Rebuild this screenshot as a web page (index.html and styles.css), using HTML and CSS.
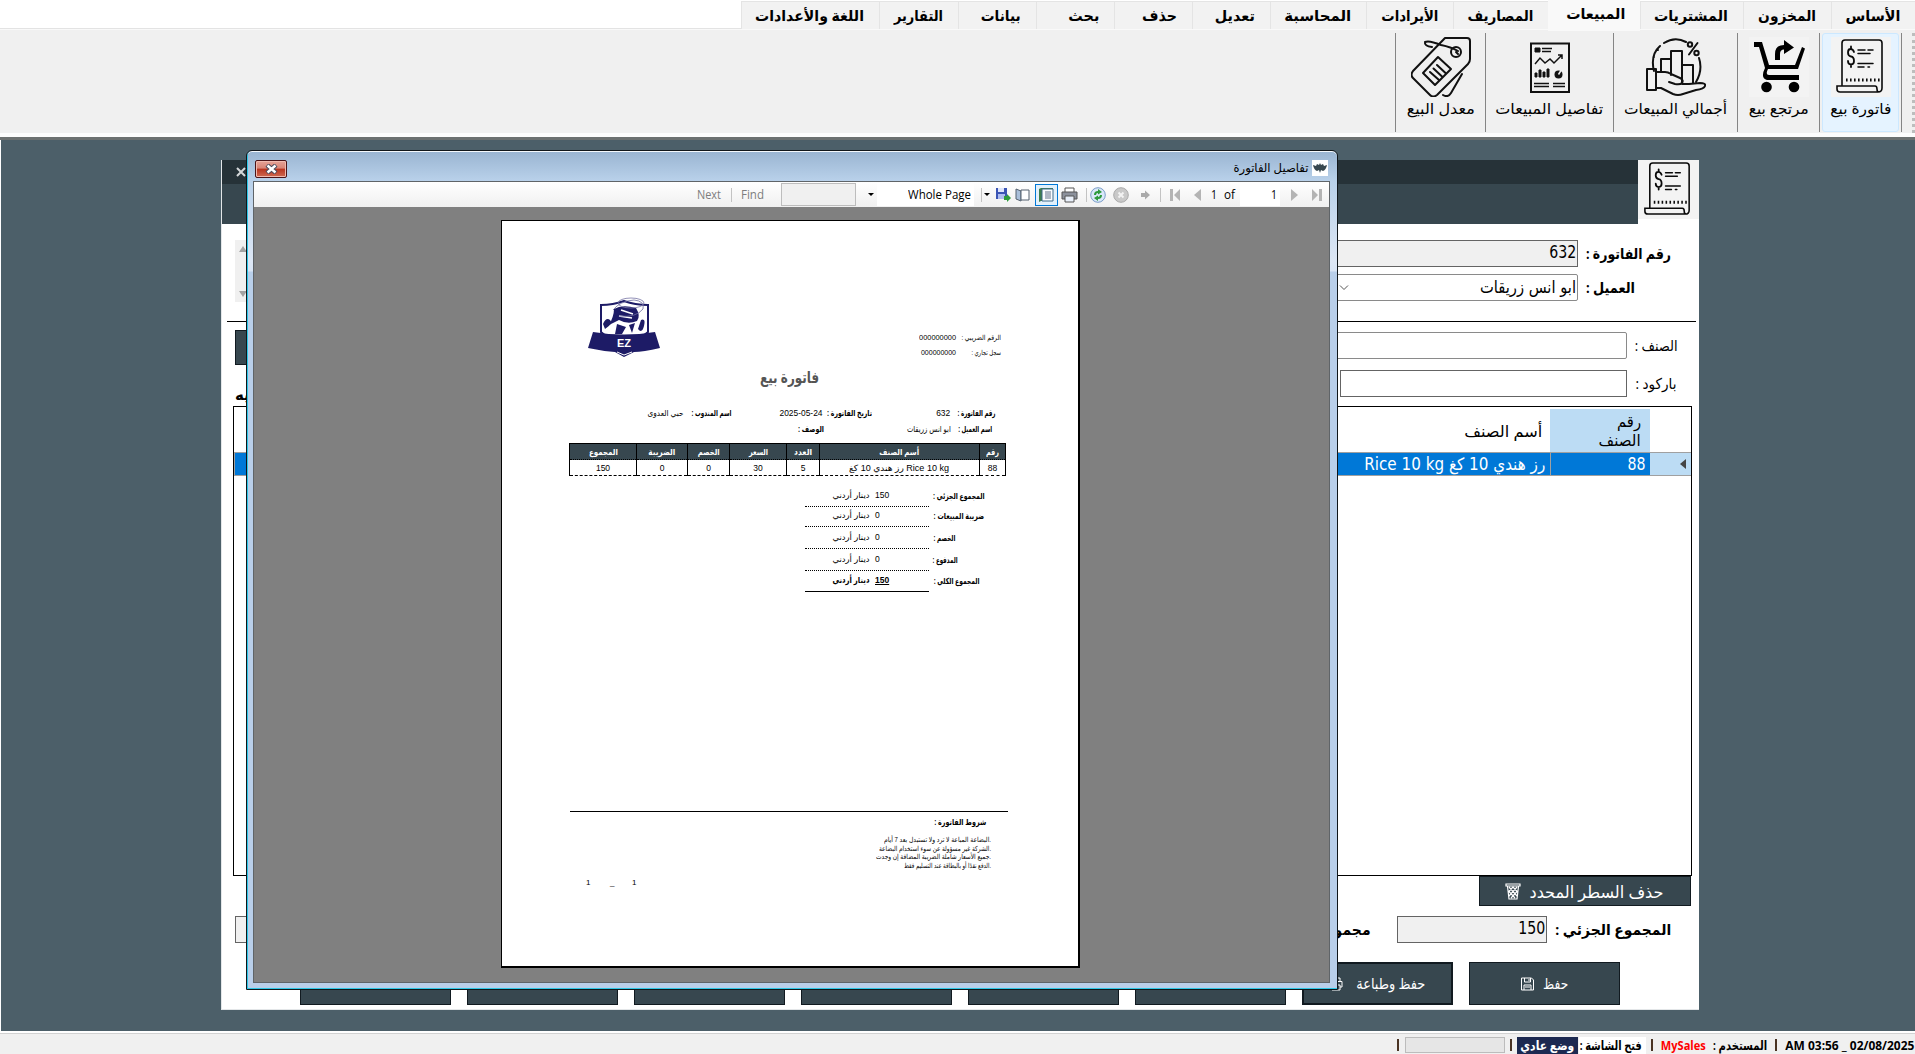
FILE: index.html
```html
<!DOCTYPE html>
<html lang="ar">
<head>
<meta charset="utf-8">
<title>MySales</title>
<link rel="stylesheet" href="styles.css">
</head>
<body>
<svg class="defs" width="0" height="0">
  <symbol id="receipt" viewBox="0 0 60 60">
    <g fill="none" stroke="#0a0a0a" stroke-width="1.6" stroke-linecap="round">
      <path d="M11 48V6q0-3 3-3h34q3 0 3 3v45q0 4-4 4H9q-3 0-3-3v-3h38q2 0 2 3t2 3"/>
      <path d="M23 15q-1-3-3.500-3Q17 12 17 15.500T20 19.500T23 24q0 3.500-3 3.500T17 24M20 9.500V12M20 27.500V30" stroke-width="1.800"/>
      <path d="M27 13h7M37 13h5M27 16.500h12M27 26.500h15M27 30h6M37 30h1.500" stroke-width="1.500"/>
      <path d="M15 43h34" stroke-width="3" stroke-dasharray="1.600 2.400" stroke-linecap="butt"/>
    </g>
  </symbol>
</svg>

<div class="app" dir="rtl">
  <nav class="tabs">
    <div class="tab w84"><span class="fit" data-w="55">الأساس</span></div>
    <div class="tab w88"><span class="fit" data-w="58">المخزون</span></div>
    <div class="tab w103"><span class="fit" data-w="74">المشتريات</span></div>
    <div class="tab w92 active"><span class="fit" data-w="59">المبيعات</span></div>
    <div class="tab w95"><span class="fit" data-w="66">المصاريف</span></div>
    <div class="tab w87"><span class="fit" data-w="57">الأيرادات</span></div>
    <div class="tab w96"><span class="fit" data-w="67">المحاسبة</span></div>
    <div class="tab w78"><span class="fit" data-w="40">تعديل</span></div>
    <div class="tab w78"><span class="fit" data-w="35">حذف</span></div>
    <div class="tab w78"><span class="fit" data-w="31">بحث</span></div>
    <div class="tab w78"><span class="fit" data-w="40">بيانات</span></div>
    <div class="tab w79"><span class="fit" data-w="49">التقارير</span></div>
    <div class="tab w138"><span class="fit" data-w="109">اللغة والأعدادات</span></div>
  </nav>

  <div class="ribbon">
    <div class="grip"></div>
    <div class="tool"><div class="tool-in hot">
      <svg class="paper" width="60" height="60"><use href="#receipt"/></svg>
      <span class="fit" data-w="61">فاتورة بيع</span></div></div>
    <div class="tool"><div class="tool-in">
      <svg class="paper" width="60" height="60" viewBox="0 0 60 60">
        <path d="M5 5H13L20 28H46L53 10L56 11.500L49 32H19Q16 38 20 38H50V43H18Q11 41 16 31L10 10H5Z"/>
        <path d="M26 23V17Q26 8 35 8V3L45 10.500L35 17V12.500Q31 12.500 31 17V23Z"/>
        <circle cx="17.500" cy="50" r="5.300"/><circle cx="45" cy="50" r="5.300"/>
      </svg>
      <span class="fit" data-w="60">مرتجع بيع</span></div></div>
    <div class="tool"><div class="tool-in">
      <svg width="60" height="60" viewBox="0 0 60 60" fill="none" stroke="#111" stroke-width="2" stroke-linejoin="round" stroke-linecap="round">
        <path d="M8 34Q4 18 14 9M12 13v0M18 6Q29-1 40 5M53 21Q57 33 50 45M8 20v0"/>
        <circle cx="44" cy="7.500" r="2.200"/><circle cx="50.500" cy="16" r="2.200"/><path d="M51.500 6L43 17.500"/>
        <path d="M15 34V22H25V38M25 38V14H36V46M36 28H47V46"/>
        <path d="M1 32H10V53H1ZM10 35H19Q22 35 25 37L34 41Q38 43 36 46Q34 48 29 47L23 45M36 47H43L54 46Q60 46 59 49Q58 52 50 53L37 57Q32 59 27 57L15 51H10"/>
      </svg>
      <span class="fit" data-w="103">أجمالي المبيعات</span></div></div>
    <div class="tool"><div class="tool-in">
      <svg width="60" height="60" viewBox="0 0 60 60" fill="none" stroke="#111" stroke-width="1.500">
        <path d="M11 6.500H49V55H11Z" stroke-width="2"/><path d="M15 11h5v4h-5zM15 40V36h2v4zM19 40V33h2v7zM23 40V35h2v5zM27 40V32h2v8z" fill="#111" stroke-width="1"/>
        <path d="M22 11.500h10M22 14.500h9M14 46.500h15M14 49.500h15M33 46.500h12M33 49.500h12M15 27L20 21L25 26L30 22L34 26L42 18M38 18h4v4"/>
        <circle cx="38.500" cy="37.500" r="4" fill="#111" stroke="none"/><path d="M38.500 37.500L42 32" stroke="#f0f0f0"/>
      </svg>
      <span class="fit" data-w="108">تفاصيل المبيعات</span></div></div>
    <div class="tool last"><div class="tool-in">
      <svg width="60" height="60" viewBox="0 0 60 60" fill="none" stroke="#111" stroke-width="2" stroke-linejoin="round" stroke-linecap="round">
        <path d="M34 1H56Q59 1 59 4V22Q59 25 57 27L26 58Q22 61 19 58L2 41Q-1 38 2 34Z"/>
        <path d="M27 20L40 32L24 48L12 36Z"/><path d="M19 35L28 43M22.500 31.500L31 39.500M26 28L34.500 36"/>
        <circle cx="45" cy="15" r="5"/><path d="M47 14Q40 10 30 8Q18 3 14 5Q13 9 21 10M45 15l2 2"/>
        <path d="M51 37L40 56Q37 61 32 58"/>
      </svg>
      <span class="fit" data-w="68">معدل البيع</span></div></div>
  </div>

  <main class="desktop">
    <section class="form">
      <header class="form-head">
        <svg class="paper" width="61" height="59" viewBox="0 0 60 60"><use href="#receipt"/></svg>
        <div class="form-bar"><div class="form-close"><svg width="10" height="10" viewBox="0 0 10 10"><path d="M1 1L9 9M9 1L1 9" stroke="#d5d8da" stroke-width="2"/></svg></div></div>
      </header>
      <div class="top-fields">
        <div class="fields">
          <label><b class="fit" data-w="85">رقم الفاتورة :</b></label><div class="input ro"><span class="fit" data-w="27">632</span></div>
          <label><b class="fit" data-w="49">العميل :</b></label><div class="input combo"><span class="fit" data-w="96">ابو انس زريقات</span>
            <svg width="10" height="6" viewBox="0 0 10 6"><path d="M1 .5L5 4.500L9 .5" fill="none" stroke="#555"/></svg></div>
        </div>
        <div class="scroll"><i class="up"></i><i class="down"></i></div>
      </div>
      <div class="item-fields">
        <div class="fields narrow">
          <label><span class="fit" data-w="43">الصنف :</span></label><div class="input light"></div>
          <label><span class="fit" data-w="41">باركود :</span></label><div class="input half"></div>
        </div>
        <div class="left-side"><div class="dark-btn"></div><b class="fit">الكميه</b></div>
      </div>
      <div class="grid">
        <div class="grid-head">
          <div></div>
          <div class="sel"><span class="fit" data-w="24">رقم</span><span class="fit" data-w="42">الصنف</span></div>
          <div class="name"><span class="fit" data-w="78">أسم الصنف</span></div>
        </div>
        <div class="grid-row">
          <div class="mark"><i></i></div>
          <div><span class="fit" data-w="18">88</span></div>
          <div><span class="fit" data-w="181">رز هندي 10 كغ Rice 10 kg</span></div>
        </div>
      </div>
      <div class="delete"><span class="fit" data-w="134">حذف السطر المحدد</span>
        <svg width="16" height="17" viewBox="0 0 16 17" fill="none" stroke="#fff" stroke-width="1.200"><path d="M1 1H15V3H1ZM2.500 3.500L4 16H12L13.500 3.500M4 4L12 13M8 4L12.500 9M3.500 8L10 15M12 4L4 13M8 4L3.500 9M12.500 8L6 15"/></svg>
      </div>
      <div class="sums">
        <b class="fit" data-w="116">المجموع الجزئي :</b><div class="input ro"><span class="fit" data-w="27">150</span></div>
        <b class="fit second" data-w="110">مجموع الضريبة :</b><div class="input ro end"></div>
      </div>
      <div class="actions">
        <div class="act"><span class="fit" data-w="25">حفظ</span>
          <svg width="13" height="14" viewBox="0 0 13 14" fill="none" stroke="#fff"><path d="M1 1H10.500L12.500 3V13H.5V1ZM3.500 1V5H9.500V1M8 2V4M3 13V8H10V13M4 10H9"/></svg></div>
        <div class="act focus"><span class="fit" data-w="69">حفظ وطباعة</span>
          <svg width="14" height="14" viewBox="0 0 14 14" fill="none" stroke="#fff"><path d="M3 4V1H11V4M3 10H1V4.500H13V10H11M3 8H11V13H3Z"/></svg></div>
        <div class="act"></div><div class="act"></div><div class="act"></div><div class="act"></div><div class="act"></div><div class="act"></div>
      </div>
    </section>

    <section class="dialog">
      <div class="title">
        <svg class="logo16" width="16" height="16" viewBox="0 0 16 16" fill="#37474f"><path d="M8 3L9 5L11 4L12 6L15 5Q14 10 11 11L9 10L8 13L7 10L5 11Q2 10 1 5L4 6L5 4L7 5Z"/></svg>
        <span class="fit" data-w="75">تفاصيل الفاتورة</span>
        <div class="close"><svg width="13" height="10" viewBox="0 0 13 10"><path d="M2 1L11 9M11 1L2 9" stroke="#4a4a5c" stroke-width="4.500"/><path d="M2.500 1.500L10.500 8.500M10.500 1.500L2.500 8.500" stroke="#fff" stroke-width="2.400"/></svg></div>
      </div>
      <div class="client">
        <div class="viewer-bar" dir="ltr">
          <span></span>
          <span class="fit off" data-w="24">Next</span><i class="sep"></i><span class="fit off" data-w="23">Find</span>
          <span class="find"></span><i class="tri"></i>
          <span class="zoom"><span class="fit" data-w="63">Whole Page</span></span><i class="sep"></i><i class="tri"></i>
          <svg width="16" height="16" viewBox="0 0 16 16"><path d="M1 1H12V12H1Z" fill="#3b55b5"/><path d="M3 1H9V5H3Z" fill="#dfe6fb"/><path d="M3 7H10V12H3Z" fill="#aebdf0"/><path d="M9 9H12V7L16 11L12 15V13H9Z" fill="#2e9c3c"/></svg>
          <svg width="16" height="16" viewBox="0 0 16 16" stroke="#55616f"><path d="M1 2L6 4V14L1 12Z" fill="#a9bfda"/><path d="M6 3H14V13H6Z" fill="#fff"/></svg>
          <span class="picked"><svg width="17" height="16" viewBox="0 0 17 16"><path d="M1 2L3 1H15V14H3L1 15Z" fill="#3d7d4f"/><path d="M4 2H15V14H4Z" fill="#fafcff" stroke="#3f6a8a"/><path d="M7 5H13M7 7H13M7 9H13M7 11H13" stroke="#65758c"/></svg></span>
          <svg width="17" height="16" viewBox="0 0 17 16" stroke="#555"><path d="M4 1H13V6H4Z" fill="#fff"/><path d="M1 5H16V12H1Z" fill="#8c919c"/><path d="M4 9H13V15H4Z" fill="#e9f0fa"/></svg>
          <i class="sep"></i>
          <svg width="16" height="16" viewBox="0 0 16 16"><circle cx="8" cy="8" r="7.300" fill="#d9e8fa" stroke="#7a9cc8"/><path d="M4 8Q4 4 8 4V2L12 5L8 7.500V6Q6 6 6 8ZM12 8Q12 12 8 12V14L4 11L8 8.500V10Q10 10 10 8Z" fill="#2c9a3c"/></svg>
          <svg width="16" height="16" viewBox="0 0 16 16"><circle cx="8" cy="8" r="7.300" fill="#c9c9c9" stroke="#aaa"/><path d="M5.500 5.500L10.500 10.500M10.500 5.500L5.500 10.500" stroke="#f3f3f3" stroke-width="2"/></svg>
          <svg width="11" height="10" viewBox="0 0 11 10"><path d="M1 3H5V.5L10 5L5 9.500V7H1Z" fill="#aaa"/></svg>
          <i class="sep"></i>
          <svg width="11" height="12" viewBox="0 0 11 12" fill="#b4b4b4"><path d="M0 0H3V12H0ZM10 0V12L4 6Z"/></svg>
          <svg width="7" height="12" viewBox="0 0 7 12" fill="#b4b4b4"><path d="M7 0V12L0 6Z"/></svg>
          <span class="fit" data-w="6">1</span><span class="fit" data-w="11">of</span><span class="pageno"><span class="fit" data-w="6">1</span></span>
          <svg width="7" height="12" viewBox="0 0 7 12" fill="#b4b4b4"><path d="M0 0V12L7 6Z"/></svg>
          <svg width="11" height="12" viewBox="0 0 11 12" fill="#b4b4b4"><path d="M0 0V12L6 6ZM7 0H10V12H7Z"/></svg>
        </div>

        <article class="page">
          <div class="inv-head">
            <div class="tax">
              <span class="fit" data-w="39">الرقم الضريبي :</span><span class="fit" data-w="37">000000000</span>
              <span class="fit" data-w="34">سجل تجاري :</span><span class="fit" data-w="37">000000000</span>
            </div>
            <svg width="72" height="62" viewBox="0 0 72 62">
              <path d="M36 5Q25 9 13 9V36L36 55L60 36V9Q47 9 36 5Z" fill="#fff" stroke="#1d1b66" stroke-width="2"/>
              <path d="M26 13Q34 8 48 12Q53 20 49 25Q40 29 31 24L21 29Q26 20 26 13Z" fill="#1d1b66"/>
              <path d="M33 14L45 18M31 20L44 22" stroke="#fff" stroke-width="1.500"/>
              <path d="M15 28Q18 21 22 24T17 33ZM53 24Q58 22 56 30T50 33ZM29 28L38 31L34 38H27ZM41 29L47 27L44 37Z" fill="#1d1b66"/>
              <ellipse cx="43" cy="7" rx="13" ry="5" fill="none" stroke="#7775a5" stroke-width=".8"/><path d="M25 14Q32 5 46 4Q57 5 55 13Q48 22 31 20" fill="none" stroke="#6f6da0" stroke-width=".8"/>
              <path d="M5 36Q36 41 67 36L72 52Q55 56 46 56L36 61L27 56Q14 55 0 52Z" fill="#1d1b66"/>
              <path d="M29 56L36 59L44 56" stroke="#fff" fill="none" stroke-width="1"/>
              <text x="36" y="51" text-anchor="middle" class="badge">EZ</text>
            </svg>
          </div>
          <h1><span class="fit" data-w="59">فاتورة بيع</span></h1>
          <div class="meta one">
            <b class="fit" data-w="38">رقم الفاتورة :</b><span class="fit" data-w="14">632</span>
            <b class="fit" data-w="45">تاريخ الفاتورة :</b><span class="fit" data-w="43">2025-05-24</span>
            <b class="fit" data-w="40">اسم المندوب :</b><span class="fit" data-w="36">حبي العدوى</span>
          </div>
          <div class="meta two">
            <b class="fit" data-w="34">اسم العميل :</b><span class="fit" data-w="44">ابو انس زريقات</span><b class="fit" data-w="26">الوصف :</b>
          </div>
          <table class="lines">
            <colgroup><col class="c1"><col class="c2"><col class="c3"><col class="c4"><col class="c5"><col class="c6"><col class="c7"></colgroup>
            <tr><th><span class="fit" data-w="13">رقم</span></th><th><span class="fit" data-w="40">أسم الصنف</span></th><th><span class="fit" data-w="18">العدد</span></th><th><span class="fit" data-w="19">السعر</span></th><th><span class="fit" data-w="22">الخصم</span></th><th><span class="fit" data-w="27">الضريبة</span></th><th><span class="fit" data-w="29">المجموع</span></th></tr>
            <tr><td>88</td><td dir="ltr"><span class="fit" data-w="100">رز هندي 10 كغ Rice 10 kg</span></td><td>5</td><td>30</td><td>0</td><td>0</td><td>150</td></tr>
          </table>
          <div class="totals">
            <div class="total r1"><b class="fit" data-w="56">المجموع الجزئي :</b><div><span>150</span><span class="fit" data-w="37">دينار أردني</span></div></div>
            <div class="total r2"><b class="fit" data-w="55">ضريبة المبيعات :</b><div><span>0</span><span class="fit" data-w="37">دينار أردني</span></div></div>
            <div class="total r3"><b class="fit" data-w="26">الخصم :</b><div><span>0</span><span class="fit" data-w="37">دينار أردني</span></div></div>
            <div class="total r3"><b class="fit" data-w="29">المدفوع :</b><div><span>0</span><span class="fit" data-w="37">دينار أردني</span></div></div>
            <div class="total r5"><b class="fit" data-w="50">المجموع الكلي :</b><div><b><u>150</u></b><b class="fit" data-w="37">دينار أردني</b></div></div>
          </div>
          <footer class="terms">
            <b class="fit" data-w="52">شروط الفاتورة :</b>
            <div class="rules">
              <p><span class="fit" data-w="107">البضاعة المباعة لا ترد ولا تستبدل بعد 7 أيام.</span></p>
              <p><span class="fit" data-w="112">الشركة غير مسؤولة عن سوء استخدام البضاعة.</span></p>
              <p><span class="fit" data-w="115">جميع الأسعار شاملة الضريبة المضافة إن وجدت.</span></p>
              <p><span class="fit" data-w="87">الدفع نقدًا أو بالبطاقة عند التسليم فقط.</span></p>
            </div>
          </footer>
          <div class="pages" dir="ltr"><span>1</span><span>_</span><span>1</span></div>
        </article>
      </div>
    </section>
  </main>

  <footer class="status">
    <span class="fit" dir="ltr" data-w="129">AM 03:56 _ 02/08/2025</span><i></i>
    <span class="fit" data-w="54">المستخدم :</span><span class="fit user" data-w="45">MySales</span><i></i>
    <span class="open"><span class="fit" data-w="62">فتح الشاشة :</span></span><span class="mode"><span class="fit" data-w="54">وضع عادي</span></span><i></i>
    <span class="progress"></span><i></i>
  </footer>
</div>
<script src="fit.js"></script>
</body>
</html>
```
FILE: styles.css
```css
* { box-sizing: border-box; }
body { margin: 0; width: 1915px; height: 1054px; overflow: hidden; background: #fff; color: #000;
  font: 16px/1 "Open Sans", "DejaVu Sans", sans-serif; }
svg { display: block; flex: none; }
.defs { position: absolute; }
.fit { display: inline-block; white-space: nowrap; flex: none; }
.app { display: flex; flex-direction: column; height: 1054px; }

.tabs { display: flex; height: 29px; padding-top: 1px; border-bottom: 1px solid #e3e3e3; flex: none; }
.tab { height: 28px; padding: 0 15px 0 0; display: flex; align-items: center; background: #f2f2f2;
  border: 1px solid #e4e4e4; border-width: 1px 0 0 1px; font-weight: bold; font-size: 15px; }
.tab.active { height: 31px; margin-top: -1px; padding-bottom: 5px; background: #f9f9f9; border-color: #f9f9f9; position: relative; }
.w78 { width: 78px; } .w79 { width: 79px; } .w84 { width: 84px; } .w87 { width: 87px; } .w88 { width: 88px; }
.w92 { width: 92px; } .w95 { width: 95px; } .w96 { width: 96px; } .w103 { width: 103px; } .w138 { width: 138px; }

.ribbon { display: flex; height: 111px; flex: none; padding-top: 3px; background: #f0f0f0; border-top: 1px solid #f9f9f9;
  border-bottom: 3px solid #6b7070; box-shadow: inset 0 -4px #fcfcfc; }
.grip { width: 13px; height: 100px; border-right: 3px dotted #bdbdbd; }
.tool { height: 99px; border-right: 1px solid #858585; padding: 0 2px; display: flex; }
.tool:nth-child(2) { width: 82px; } .tool:nth-child(3) { width: 82px; } .tool:nth-child(4) { width: 124px; }
.tool:nth-child(5) { width: 128px; } .tool.last { width: 91px; border-left: 1px solid #858585; }
.tool-in { flex: 1; display: flex; flex-direction: column; align-items: center; padding-top: 3px; gap: 4px; border: 1px solid transparent; font-size: 15px; }
.tool-in.hot { background: #e5f3ff; border-color: #cce8ff; border-radius: 3px; }
.paper { background: #f3f3f3; }

.desktop { position: relative; flex: 1; background: #4c5f69; border-left: 1px solid #fff; }
.form { position: absolute; left: 220px; top: 20px; width: 1478px; height: 850px; background: #fff;
  border-left: 1px solid #e3e6e8; border-bottom: 1px solid #e3e6e8; font-size: 17px; }
.form-head { display: flex; height: 64px; }
.form-bar { flex: 1; background: linear-gradient(#263238 24px, #37474f 24px); }
.form-close { height: 24px; display: flex; justify-content: flex-end; align-items: center; padding-left: 14px; }
.top-fields { display: flex; justify-content: space-between; height: 98px; margin: 0 3px 0 5px; padding: 16px 25px 0 8px; border-bottom: 1px solid #000; }
.fields { display: grid; grid-template-columns: 93px 460px; grid-auto-rows: 27px; row-gap: 7px; }
.fields label { display: flex; justify-content: flex-end; align-items: center; padding-left: 8px; font-size: 15px; }
.input { display: flex; align-items: center; padding-right: 1px; height: 27px; border: 1px solid #646464; background: #fff; font-family: "DejaVu Sans Condensed", "DejaVu Sans", sans-serif; }
.input.ro { background: #f0f0f0; padding-bottom: 3px; }
.input.combo, .input.light { border-color: #8a8a8a; border-radius: 2px; }
.input.combo svg { margin-right: 131px; }
.scroll { width: 20px; height: 62px; background: #f0f0f0; display: flex; flex-direction: column; justify-content: space-between; padding: 6px 0 5px 4px; align-items: flex-end; }
.scroll i { border: 4px solid transparent; }
.scroll .up { border-top: 0; border-bottom: 6px solid #a3a3a3; }
.scroll .down { border-bottom: 0; border-top: 6px solid #a3a3a3; }
.item-fields { display: flex; justify-content: space-between; height: 84px; padding: 10px 0 0 13px; }
.narrow { grid-template-columns: 72px 500px; row-gap: 11px; }
.input.half { width: 287px; }
.left-side { margin-top: -2px; width: 60px; display: flex; flex-direction: column; align-items: flex-end; gap: 22px; font-size: 15px; }
.dark-btn { width: 60px; height: 35px; background: #37474f; border: 1px solid #111a20; }
.grid { height: 470px; margin: 0 7px 0 11px; border: 1px solid #000; border-top: 1px solid #000; padding-top: 2px; }
.grid-head { display: grid; grid-template-columns: 41px 100px 1fr; height: 44px; border-bottom: 1px solid #a0a0a0; font-size: 16px; }
.grid-head .sel { background: #bcdcf4; display: flex; flex-direction: column; align-items: flex-start; justify-content: center; gap: 3px; padding-right: 9px; }
.grid-head .name { display: flex; align-items: center; padding-right: 8px; }
.grid-row { display: grid; grid-template-columns: 41px 100px 1fr; height: 23px; background: #0078d7; color: #fff; border-bottom: 1px solid #a0a0a0; font-family: "DejaVu Sans Condensed", "DejaVu Sans", sans-serif; }
.grid-row > div { display: flex; align-items: center; padding-right: 5px; border-left: 1px solid #a0a0a0; }
.grid-row .mark { background: #bcdcf4; border-left: 0; }
.mark i { border: 5px solid transparent; border-right: 0; border-left: 6px solid #444; transform: scaleX(-1); }
.delete { width: 212px; height: 30px; margin-right: 8px; background: #37474f; border: 1px solid #111a20; color: #fff; display: flex; align-items: center; padding-right: 27px; gap: 8px; }
.sums { display: flex; align-items: center; height: 27px; margin-top: 10px; padding: 0 28px 0 13px; font-size: 15px; }
.sums .input { width: 150px; margin-right: 8px; font-size: 17px; }
.sums .second { margin-right: 26px; }
.sums .end { margin-right: auto; }
.actions { display: flex; gap: 16px; margin-top: 19px; padding-right: 79px; }
.act { width: 151px; height: 43px; background: #37474f; border: 1px solid #111a20; color: #fff; font-size: 15px; display: flex; align-items: center; padding-right: 51px; gap: 9px; }
.act.focus { border-width: 2px; padding-right: 26px; gap: 13px; }

.dialog { position: absolute; left: 245px; top: 10px; width: 1092px; height: 840px; border: 1px solid #10161a; border-radius: 6px 6px 0 0;
  padding: 0 7px 6px 6px; box-shadow: inset 1px -1px #2cc6e6, inset 0 1px #f4f8fc;
  background: linear-gradient(#99b4d1, #b9d1ea 30px, #dde7f5 110px, #d9e5f5 120px, #b9cfea 121px); display: flex; flex-direction: column; }
.title { height: 30px; display: flex; align-items: center; padding: 3px 2px 0 2px; font-size: 12px; }
.title .fit { margin-right: 4px; }
.logo16 { background: #fff; }
.close { margin-right: auto; align-self: flex-start; margin-top: 6px; width: 32px; height: 18px; border: 1px solid #4a1418; border-radius: 2px; box-shadow: inset 0 0 0 1px #f0b9ae;
  background: linear-gradient(#e5a397, #d98476 45%, #b8341f 50%, #cf6a52); display: flex; align-items: center; justify-content: center; }
.client { flex: 1; background: #808080; border: 1px solid #5f6468; }
.viewer-bar { display: grid; height: 25px; align-items: center; justify-items: start; background: linear-gradient(#fff, #f0f0f0); font-size: 12px;
  grid-template-columns: 443px 34px 10px 40px 87px 9px 104px 3px 11px 20px 20px 26px 25px 4px 23px 27px 20px 10px 24px 17px 13px 16px 51px 21px 11px; }
.off { color: #7d7d7d; }
.sep { width: 1px; height: 14px; background: #c3c3c3; }
.tri { border: 3px solid transparent; border-top-color: #000; border-bottom: 0; }
.find { width: 75px; height: 23px; background: #f0f0f0; border: 1px solid #bdbdbd; }
.zoom { width: 97px; height: 23px; background: #fff; display: flex; align-items: center; justify-content: flex-end; padding-right: 3px; }
.picked { width: 23px; height: 22px; border: 1px solid #0078d7; background: #e2f0fb; display: flex; align-items: center; justify-content: center; }
.pageno { width: 40px; height: 23px; background: #fff; display: flex; align-items: center; justify-content: flex-end; padding-right: 3px; }

.page { width: 579px; height: 748px; margin: 13px auto 0 0; position: relative; left: 247px; background: #fff; border: 1px solid #000; border-width: 1px 2px 2px 1px;
  font: 8.500px/12px "Liberation Sans", "DejaVu Sans", sans-serif; }
.inv-head { display: flex; justify-content: space-between; height: 72px; margin-top: 75px; padding: 0 77px 0 86px; }
.inv-head { height: 72px; }
.tax { display: grid; grid-template-columns: 45px auto; grid-auto-rows: 15px; align-items: center; padding-top: 34px; font-size: 7px; align-content: start; }
.badge { font: bold 11px "Liberation Sans", sans-serif; fill: #fff; }
.page h1 { margin: 0; height: 20px; font-size: 16px; line-height: 20px; color: #555; text-align: center; }
.meta { display: grid; height: 16px; align-items: center; justify-items: start; }
.meta.one { margin-top: 17px; padding-right: 82px; grid-template-columns: 46px 78px 50px 91px 47px auto; }
.meta.two { padding-right: 86px; grid-template-columns: 41px 127px auto; }
.lines { width: 437px; margin: 6px 72px 0 0; border-collapse: collapse; table-layout: fixed; }
.lines th, .lines td { padding: 0; height: 16px; text-align: center; border-left: 1px solid #000; border-right: 1px solid #000; }
.lines th { background: #37474f; color: #fff; border-top: 1px solid #000; border-bottom: 1px dotted #000; line-height: 14px; }
.lines td { border-bottom: 1px dashed #000; }
.c1 { width: 26px; } .c2 { width: 160px; } .c3 { width: 33px; } .c4 { width: 57px; } .c5 { width: 42px; } .c6 { width: 51px; } .c7 { width: 67px; }
.totals { padding-right: 87px; }
.total { display: grid; grid-template-columns: 62px 124px; align-items: end; }
.total > b { justify-self: end; margin-bottom: 5px; padding-left: 6px; }
.total > div { display: grid; grid-template-columns: 54px auto; column-gap: 6px; border-bottom: 1px dotted #000; padding-bottom: 5px; }
.total > div > :first-child { justify-self: end; }
.total > div > :last-child { justify-self: start; }
.r1 { height: 31px; } .r2 { height: 20px; } .r3 { height: 22px; } .r5 { height: 21px; }
.total.r5 > div { border-bottom-style: solid; }
.terms { width: 438px; margin: 219px 70px 0 0; border-top: 1px solid #000; padding: 4px 22px 0 0; }
.terms > b { display: block; width: fit-content; }
.rules { margin: 8px -5px 0 0; font-size: 7px; }
.rules p { margin: 0; height: 8.700px; line-height: 8.700px; direction: ltr; text-align: right; }
.pages { display: grid; grid-template-columns: 24px 22px auto; padding: 6px 0 0 84px; font-size: 8px; }

.status { height: 23px; flex: none; margin-bottom: 0; display: flex; align-items: center; background: #f0f0f0; border-top: 2px solid #fff; box-shadow: inset 0 1px #d2d2d2;
  padding: 3px 1px 0 0; font-weight: bold; font-size: 13px; }
.status i { width: 2px; height: 12px; margin: 0 8px; background: #4a3424; flex: none; }
.user { color: #f00; margin-right: 7px; }
.status i + .open { margin-right: -3px; }
.open { background: #fff; height: 17px; width: 67px; display: flex; align-items: center; padding-right: 4px; }
.mode { background: #1c2951; color: #fff; height: 17px; width: 61px; display: flex; align-items: center; padding-right: 4px; margin-right: 1px; }
.mode + i { margin: 0 5px 0 5px; }
.progress { width: 100px; height: 16px; background: #e6e6e6; border: 1px solid #bcbcbc; }
.progress + i { margin: 0 6px; }
```
FILE: fit.js
```js
// Condense or widen each caption to its designed width, keeping the line box in step.
document.querySelectorAll('.fit[data-w]').forEach(function (el) {
  var want = Number(el.dataset.w);
  var have = el.getBoundingClientRect().width;
  var rtl = getComputedStyle(el.parentElement).direction === 'rtl';
  var centred = getComputedStyle(el.parentElement).textAlign === 'center';
  var diff = want - have;
  el.style.transform = 'scaleX(' + want / have + ')';
  if (centred) {
    el.style.marginLeft = el.style.marginRight = diff / 2 + 'px';
  } else {
    el.style.transformOrigin = rtl ? 'right' : 'left';
    el.style[rtl ? 'marginLeft' : 'marginRight'] = diff + 'px';
  }
});
```
